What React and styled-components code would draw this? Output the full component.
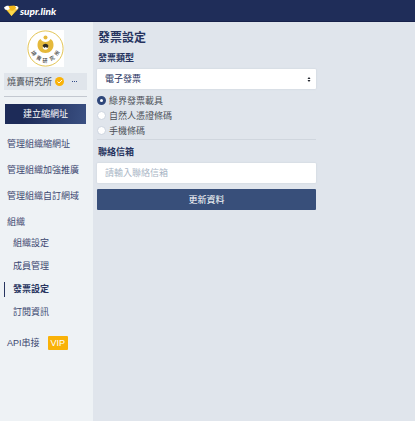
import React, { useState } from "react";
import styled, { createGlobalStyle, css } from "styled-components";

const navy = "#27345f";
const ink = "#3c4770";

const GlobalStyle = createGlobalStyle`
  *, *::before, *::after { box-sizing: border-box; }
  html, body { margin: 0; }
  body {
    background: #e0e5ec;
    color: ${ink};
    font: 9px/14px "Liberation Sans", "Noto Sans CJK TC", sans-serif;
  }
  button, input, select { font: inherit; }
`;

const Page = styled.div`
  display: flex;
  flex-direction: column;
  min-height: 100vh;
`;

const Header = styled.header`
  display: flex;
  align-items: center;
  height: 22px;
  padding: 0 4px;
  background: #1f2d59;
  border-bottom: 1px solid #17214a;
`;

const Brand = styled.a`
  display: flex;
  align-items: center;
  gap: 1px;
  color: #fff;
  font: italic 900 10px/12px Lato, sans-serif;
  text-decoration: none;
`;

const Body = styled.div`
  display: flex;
  flex: 1;
`;

const Sidebar = styled.aside`
  display: flex;
  flex: 0 0 93px;
  flex-direction: column;
  padding: 8px 6px 8px 4px;
  background: #eef2f5;
`;

const Avatar = styled.svg`
  align-self: center;
  display: block;
  margin-bottom: 6px;
`;

const Organisation = styled.div`
  display: flex;
  align-items: center;
  height: 17px;
  padding-left: 3px;
  background: #e0e5eb;
  color: #4c5057;
`;

const Verified = styled.svg`
  margin-left: 3px;
`;

const MoreButton = styled.button`
  display: flex;
  margin-left: 8px;
  padding: 4px 0;
  border: 0;
  background: none;
`;

const Divider = styled.hr`
  width: 100%;
  margin: ${(p) => p.$margin};
  border: 0;
  border-top: 1px solid ${(p) => p.$color};
`;

const CreateButton = styled.button`
  height: 20px;
  margin: 0 1px 7px;
  padding: 0;
  border: 0;
  background: linear-gradient(100deg, #1d2b58 25%, #3a5082);
  color: #fff;
`;

const Nav = styled.nav`
  display: flex;
  flex-direction: column;
`;

const NavItem = styled.a`
  display: flex;
  align-items: center;
  gap: 8px;
  height: 26px;
  padding-left: 3px;
  color: ${ink};
  text-decoration: none;
  white-space: nowrap;
`;

const SubNav = styled.div`
  display: flex;
  flex-direction: column;
  gap: 8px;
  margin: 1px 0 10px;
`;

const SubItem = styled.a`
  height: 15px;
  padding-left: 8px;
  border-left: 1px solid transparent;
  color: ${ink};
  line-height: 15px;
  text-decoration: none;
  ${(p) =>
    p.$active &&
    css`
      border-color: ${navy};
      color: ${navy};
      font-weight: 700;
    `}
`;

const Badge = styled.span`
  padding: 0 3px;
  border-radius: 1px;
  background: #f9b208;
  color: #fff;
`;

const Main = styled.main`
  flex: 1;
  min-width: 0;
  padding: 7px 4px;
`;

const Form = styled.form`
  display: flex;
  flex-direction: column;
  max-width: 219px;
`;

const Title = styled.h1`
  margin: 0 0 4px;
  padding-left: 1px;
  color: ${navy};
  font-size: 12px;
  font-weight: 700;
  line-height: 18px;
`;

const Label = styled.label`
  margin-bottom: 4px;
  padding-left: 1px;
  color: ${navy};
  font-weight: 700;
`;

const field = css`
  width: 100%;
  height: 20px;
  padding: 0 8px;
  border: 0;
  border-radius: 1px;
  background: #fff;
  box-shadow: 0 0 2px #c5ccd6;
  color: ${navy};
  outline: 0;
`;

const SelectBox = styled.div`
  display: grid;
  align-items: center;
  margin-bottom: 4px;

  > * {
    grid-area: 1 / 1;
  }
`;

const Select = styled.select`
  ${field}
  appearance: none;
`;

const Arrows = styled.svg`
  justify-self: end;
  margin-right: 5px;
  pointer-events: none;
`;

const Choices = styled.div`
  display: flex;
  flex-direction: column;
`;

const Choice = styled.label`
  display: flex;
  align-items: center;
  gap: 3px;
  height: 15px;
  color: #4c5057;
`;

const Radio = styled.input`
  appearance: none;
  width: 9px;
  height: 9px;
  margin: 0;
  border: 1px solid #ccd4df;
  border-radius: 50%;
  background: #fff;

  &:checked {
    border: 3px solid #2f477b;
  }
`;

const Input = styled.input`
  ${field}
  margin-bottom: 6px;

  &::placeholder {
    color: #a9b5c5;
    opacity: 1;
  }
`;

const SubmitButton = styled.button`
  height: 21px;
  padding: 0;
  border: 0;
  border-radius: 1px;
  background: #384f7a;
  color: #fff;
`;

const Diamond = () => (
  <svg width="15" height="11" viewBox="0 0 30 22" aria-hidden="true">
    <path d="M2 7 6 2h19l4 5-14 15z" fill="#f6c42f" />
    <path d="M0 5c3-3 7-4 10-3l3 5-5 3-6-1zM19 4c4-3 8-2 10 1l-3 4-7-1z" fill="#fff" />
    <path d="m9 2 12-1 4 5-8 5-5-2z" fill="#f4b719" />
    <path d="m8 10 8 2 8-3-9 13z" fill="#ffda4d" />
  </svg>
);

const glyphs = [
  { text: "燒", x: 7, y: 23, turn: 58 },
  { text: "賣", x: 12, y: 28, turn: 28 },
  { text: "研", x: 18, y: 30, turn: 0 },
  { text: "究", x: 25, y: 28, turn: -28 },
  { text: "所", x: 30, y: 23, turn: -58 },
];

const OrganisationLogo = () => (
  <Avatar width="37" height="37" viewBox="0 0 37 37" role="img" aria-label="燒賣研究所">
    <path fill="#fff" d="M0 0h37v37H0z" />
    <circle cx="18.5" cy="18.5" r="17.6" fill="none" stroke="#dfbd42" strokeWidth="0.9" />
    <circle cx="18.5" cy="7.5" r="2" fill="#e5b93c" />
    <path
      d="M13.500 9c1 2 3 3 5 3s4-1 5-3c2 1 3 3 3 6 0 4.500-3.500 8-8 8s-8-3.500-8-8c0-3 1-5 3-6z"
      fill="#e5b93c"
    />
    <circle cx="18.5" cy="17" r="2.7" fill="#fff" />
    <path d="M15.500 16c1-3 5-3 6 0l-1 2-2-1-1 1z" fill="#302d25" />
    <g fill="#444" fontSize="5" fontWeight="500" textAnchor="middle" dominantBaseline="central">
      {glyphs.map(({ text, x, y, turn }) => (
        <text key={text} x={x} y={y} transform={`rotate(${turn} ${x} ${y})`}>
          {text}
        </text>
      ))}
    </g>
  </Avatar>
);

const links = ["管理組織縮網址", "管理組織加強推廣", "管理組織自訂網域", "組織"];
const subLinks = ["組織設定", "成員管理", "發票設定", "訂閱資訊"];
const carriers = ["綠界發票載具", "自然人憑證條碼", "手機條碼"];

export default function App() {
  const [carrier, setCarrier] = useState(carriers[0]);

  return (
    <Page>
      <GlobalStyle />
      <Header>
        <Brand href="#">
          <Diamond />
          supr.link
        </Brand>
      </Header>
      <Body>
        <Sidebar>
          <OrganisationLogo />
          <Organisation>
            燒賣研究所
            <Verified width="9" height="9" viewBox="0 0 18 18" aria-hidden="true">
              <circle cx="9" cy="9" r="9" fill="#f9b208" />
              <path d="m5 9 3 3 6-6" fill="none" stroke="#fff" strokeWidth="1.8" />
            </Verified>
            <MoreButton type="button" aria-label="更多">
              <svg width="5" height="1" viewBox="0 0 5 1" fill="#344b88">
                <path d="M0 0h1v1H0zM2 0h1v1H2zM4 0h1v1H4z" />
              </svg>
            </MoreButton>
          </Organisation>
          <Divider $margin="6px 0 7px" $color="#c3c8d0" />
          <CreateButton type="button">建立縮網址</CreateButton>
          <Nav>
            {links.map((text) => (
              <NavItem href="#" key={text}>{text}</NavItem>
            ))}
            <SubNav>
              {subLinks.map((text) => (
                <SubItem
                  href="#"
                  key={text}
                  $active={text === "發票設定"}
                  aria-current={text === "發票設定" ? "page" : undefined}
                >
                  {text}
                </SubItem>
              ))}
            </SubNav>
            <NavItem href="#">
              API串接 <Badge>VIP</Badge>
            </NavItem>
          </Nav>
        </Sidebar>
        <Main>
          <Form onSubmit={(e) => e.preventDefault()}>
            <Title>發票設定</Title>
            <Label htmlFor="type">發票類型</Label>
            <SelectBox>
              <Select id="type">
                <option>電子發票</option>
              </Select>
              <Arrows width="4" height="5" viewBox="0 0 4 5" aria-hidden="true">
                <path d="m2 0 1.5 2h-3zM2 5 .5 3h3z" fill="#20242c" />
              </Arrows>
            </SelectBox>
            <Choices role="radiogroup" aria-label="發票類型">
              {carriers.map((text) => (
                <Choice key={text}>
                  <Radio
                    type="radio"
                    name="carrier"
                    checked={carrier === text}
                    onChange={() => setCarrier(text)}
                  />
                  {text}
                </Choice>
              ))}
            </Choices>
            <Divider $margin="1px 0 5px" $color="#d0d6de" />
            <Label htmlFor="email">聯絡信箱</Label>
            <Input id="email" type="email" placeholder="請輸入聯絡信箱" />
            <SubmitButton type="submit">更新資料</SubmitButton>
          </Form>
        </Main>
      </Body>
    </Page>
  );
}
